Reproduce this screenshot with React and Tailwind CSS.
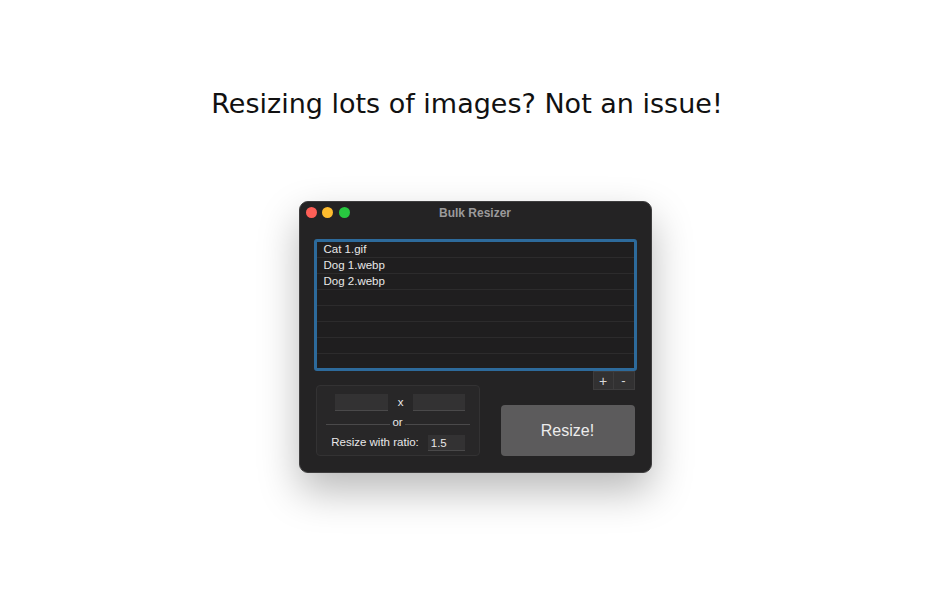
import React from "react";

const files = ["Cat 1.gif", "Dog 1.webp", "Dog 2.webp", "", "", "", "", ""];

const TrafficLights = () => (
  <div className="absolute left-[6px] top-[5px] flex gap-[5.5px]">
    <span className="w-[11px] h-[11px] rounded-full bg-[#fe5f57]" />
    <span className="w-[11px] h-[11px] rounded-full bg-[#febc2e]" />
    <span className="w-[11px] h-[11px] rounded-full bg-[#28c840]" />
  </div>
);

const Window = () => (
  <div className="w-[353px] h-[272px] rounded-[9px] bg-[#242324] border border-[#3e3d3e] shadow-[0_18px_40px_rgba(0,0,0,0.28)] flex flex-col text-[#e8e8e8] font-['Liberation_Sans',sans-serif]">
    {/* Title bar */}
    <div className="relative h-[22px] flex items-center justify-center">
      <TrafficLights />
      <span className="text-[12px] font-bold text-[#9b9a9b]">Bulk Resizer</span>
    </div>

    {/* File list */}
    <div className="mt-[15px] mx-[14px] h-[132px] border-[3px] border-[#2d6a9b] rounded-[3px] bg-[#1f1e1f] overflow-hidden">
      {files.map((name, i) => (
        <div
          key={i}
          className="h-[16px] border-b border-[#2c2b2c] pl-[7px] text-[11.5px] leading-[15px]"
        >
          {name}
        </div>
      ))}
    </div>

    {/* Add / remove */}
    <div className="flex justify-end mr-[16px]">
      <button className="w-[21px] h-[19px] bg-[#323132] border border-[#3d3c3d] text-[14px] leading-none text-[#d8d8d8]">
        +
      </button>
      <button className="w-[21px] h-[19px] bg-[#323132] border border-[#3d3c3d] border-l-0 text-[13px] leading-none text-[#d8d8d8]">
        -
      </button>
    </div>

    {/* Options + button */}
    <div className="-mt-[5px] mx-[16px] flex items-end justify-between">
      <div className="w-[164px] h-[71px] rounded-[4px] bg-[#282728] border border-[#333233] flex flex-col items-center pt-[8px] text-[11.5px]">
        <div className="flex items-center gap-[10px] ml-[5px]">
          <div className="w-[53px] h-[17px] bg-[#333233] border-b border-[#4a494a]" />
          <span className="leading-none">x</span>
          <div className="w-[52px] h-[17px] bg-[#333233] border-b border-[#4a494a]" />
        </div>
        <div className="relative w-[144px] mt-[5px] flex items-center justify-center h-[14px]">
          <div className="absolute left-0 right-0 top-[8px] h-px bg-[#4a494a]" />
          <span className="relative bg-[#282728] px-[2px] leading-none">or</span>
        </div>
        <div className="flex items-center gap-[9px] mt-[4px] ml-[1px]">
          <span>Resize with ratio:</span>
          <div className="w-[37px] h-[16px] bg-[#333233] border-b border-[#4a494a] pl-[3px] leading-[17px]">1.5</div>
        </div>
      </div>
      <button className="w-[134px] h-[51px] rounded-[4px] bg-[#5c5b5c] text-[16px] text-[#ececec]">
        Resize!
      </button>
    </div>
  </div>
);

export default function App() {
  return (
    <div className="w-full min-h-[594px] bg-white flex flex-col items-center pt-[86px]">
      <h1 className="text-[27px] leading-[36px] text-[#111] font-['DejaVu_Sans',sans-serif] mr-[16px]">
        Resizing lots of images? Not an issue!
      </h1>
      <div className="mt-[79px]">
        <Window />
      </div>
    </div>
  );
}
